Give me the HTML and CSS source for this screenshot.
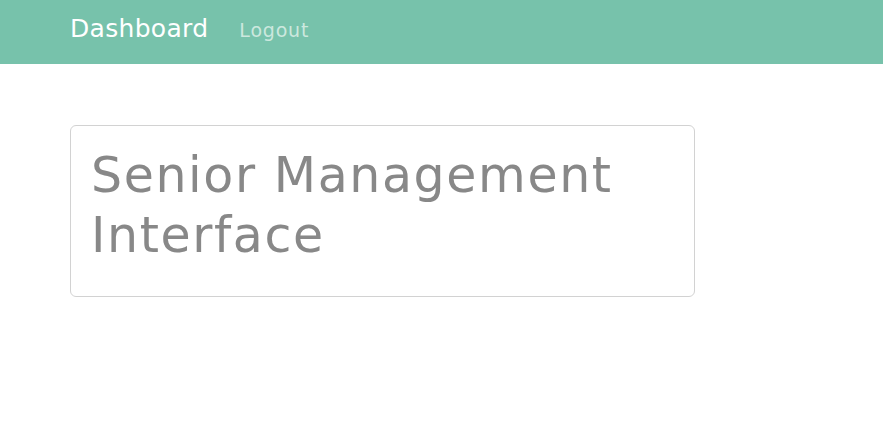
FILE: index.html
```html
<!DOCTYPE html>
<html>
<head>
<meta charset="utf-8">
<link rel="stylesheet" href="styles.css">
</head>
<body>
<nav class="navbar">
  <a class="brand" href="#">Dashboard</a>
  <a class="nav-link" href="#">Logout</a>
</nav>
<main class="content">
  <div class="card">
    <h1 class="title">Senior Management Interface</h1>
  </div>
</main>
</body>
</html>
```
FILE: styles.css
```css
* { box-sizing: border-box; }
body {
  margin: 0;
  font-family: "DejaVu Sans", sans-serif;
  background: #fff;
}
.navbar {
  height: 64px;
  background: #77c2ab;
  display: flex;
  align-items: baseline;
  padding: 14px 0 0 70px;
  gap: 31px;
}
.brand {
  color: #fff;
  text-decoration: none;
  font-size: 25px;
  letter-spacing: 0.3px;
  line-height: 30px;
}
.nav-link {
  color: #cce8de;
  text-decoration: none;
  font-size: 19px;
  letter-spacing: 0.8px;
}
.content {
  padding: 61px 70px 0 70px;
}
.card {
  width: 625px;
  height: 172px;
  border: 1px solid #d2d2d2;
  border-radius: 6px;
  padding: 20px 20px;
}
.title {
  margin: 0;
  font-weight: 400;
  font-size: 49px;
  letter-spacing: 1.6px;
  line-height: 60px;
  color: #888;
}
```
